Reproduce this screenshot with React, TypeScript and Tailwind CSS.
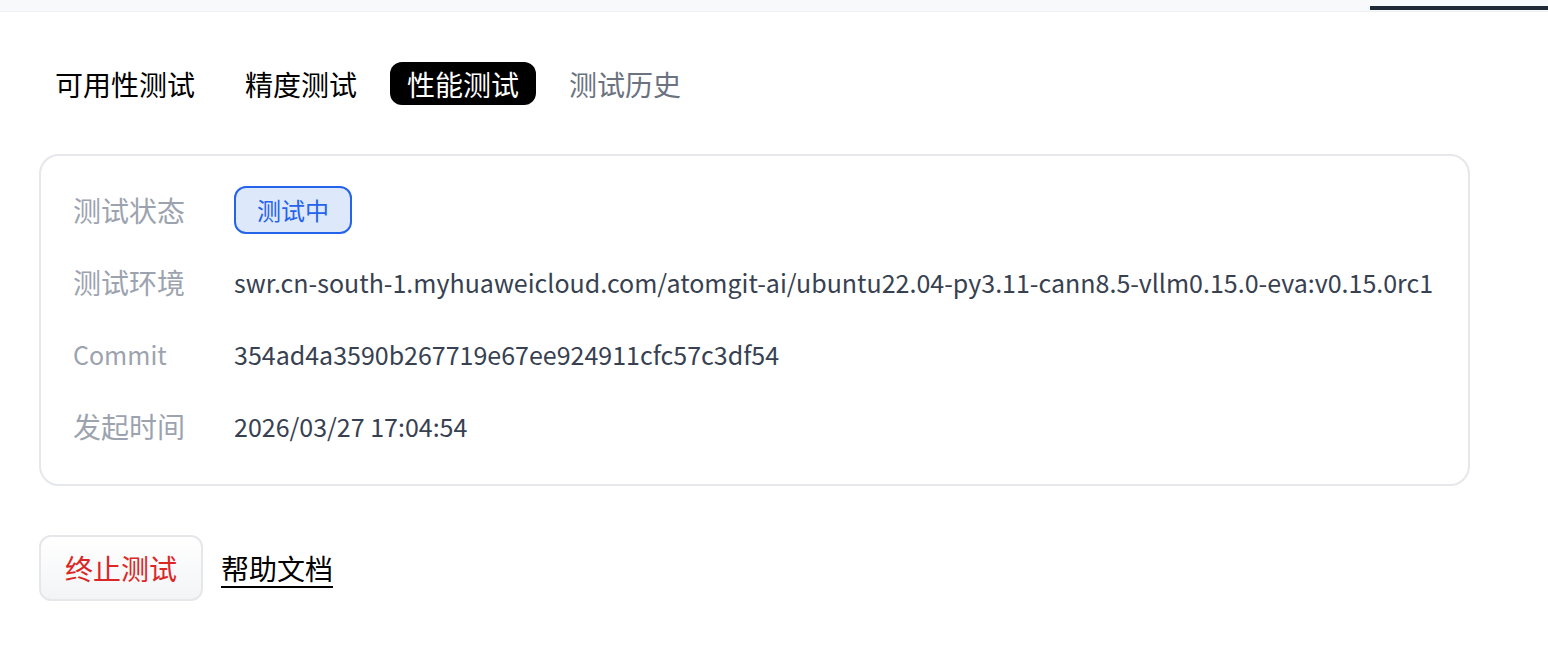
const tabs = [
  { label: '可用性测试', state: 'normal' },
  { label: '精度测试', state: 'normal' },
  { label: '性能测试', state: 'active' },
  { label: '测试历史', state: 'muted' },
];

const Row = ({ label, latin, children }: { label: string; latin?: boolean; children: React.ReactNode }) => (
  <div className="flex items-center h-[48px]">
    <div className={latin ? 'w-[161px] shrink-0 text-[#9ca3af] text-[25px]' : 'w-[161px] shrink-0 text-[#9ca3af]'}>
      {label}
    </div>
    <div className="text-[#374151] text-[25px] whitespace-nowrap">{children}</div>
  </div>
);

export default function App() {
  return (
    <div
      className="min-h-[664px] bg-white text-[28px] leading-none"
      style={{ fontFamily: '"Noto Sans CJK SC", "Noto Sans", sans-serif' }}
    >
      <div className="h-[12px] bg-[#f8f9fb] border-b border-[#eef0f3] flex justify-end pt-[6px]">
        <div className="w-[178px] h-[4px] bg-[#1f2937]" />
      </div>

      <div className="px-[39px]">
        <div className="flex gap-4 mt-[50px] -ml-px">
          {tabs.map((t) => (
            <div
              key={t.label}
              className={
                t.state === 'active'
                  ? 'h-[43px] px-[17px] flex items-center rounded-[12px] bg-black text-white'
                  : t.state === 'muted'
                  ? 'h-[43px] px-[17px] flex items-center text-[#6b7280]'
                  : 'h-[43px] px-[17px] flex items-center text-black'
              }
            >
              {t.label}
            </div>
          ))}
        </div>

        <div className="mt-[49px] w-[1431px] border-2 border-[#e5e7eb] rounded-[20px] pl-[32px] pr-8 pt-[30px] pb-[34px] flex flex-col gap-[24px]">
          <Row label="测试状态">
            <span className="inline-flex items-center h-[48px] px-[21px] rounded-[12px] border-2 border-[#2563eb] bg-[#dde8fb] text-[#2563eb] text-[24px]">
              测试中
            </span>
          </Row>
          <Row label="测试环境">
            swr.cn-south-1.myhuaweicloud.com/atomgit-ai/ubuntu22.04-py3.11-cann8.5-vllm0.15.0-eva:v0.15.0rc1
          </Row>
          <Row label="Commit" latin>
            354ad4a3590b267719e67ee924911cfc57c3df54
          </Row>
          <Row label="发起时间">2026/03/27 17:04:54</Row>
        </div>

        <div className="mt-[49px] flex items-center gap-[18px]">
          <button className="h-[66px] w-[164px] rounded-[12px] border-2 border-[#e5e7eb] bg-gradient-to-b from-white to-[#f3f4f6] text-[#dc2626] text-[28px]">
            终止测试
          </button>
          <a className="text-black underline underline-offset-[6px] decoration-2">帮助文档</a>
        </div>
      </div>
    </div>
  );
}
